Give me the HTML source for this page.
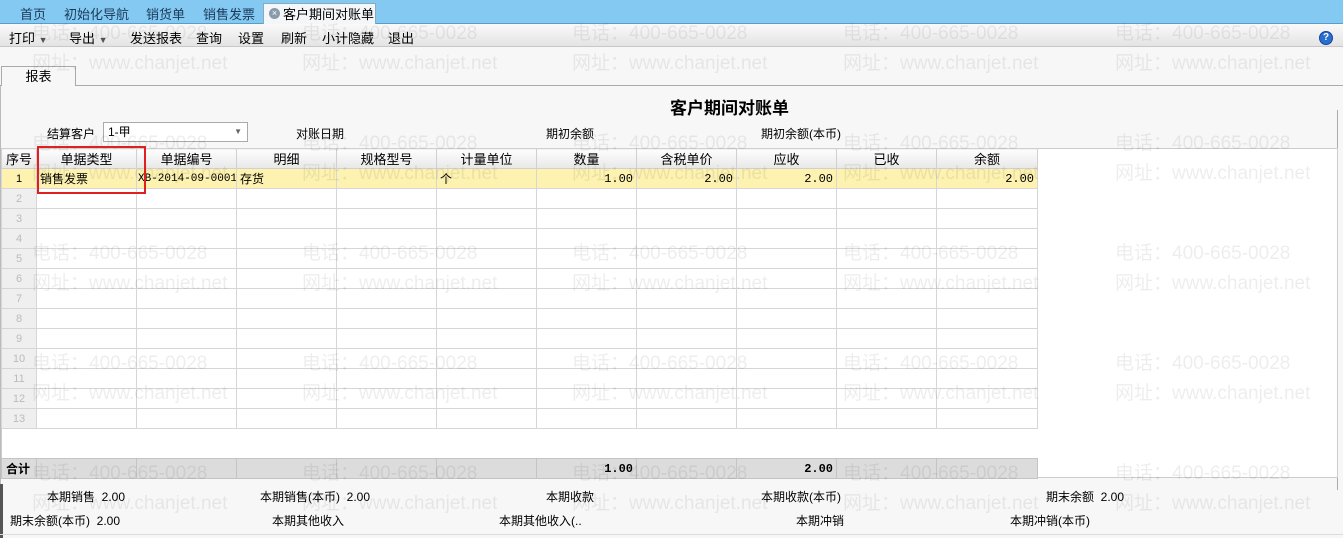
<!DOCTYPE html>
<html><head><meta charset="utf-8"><style>
*{margin:0;padding:0;box-sizing:border-box}
body{width:1343px;height:538px;overflow:hidden;background:#f7f7f7;font-family:"Liberation Sans","Noto Sans CJK SC",sans-serif;font-size:12px;color:#000;position:relative}
.a{position:absolute;white-space:nowrap}
.tabs{left:0;top:0;width:1343px;height:24px;background:#84c9f1;border-bottom:1px solid #5a9ccc}
.tab{top:4px;font-size:13px;color:#1a3a5a}
.toolbar{left:0;top:24px;width:1343px;height:23px;background:linear-gradient(#fafafa,#e4e4e4);border-bottom:1px solid #c8c8c8}
.tb{top:28px;font-size:13px}
.wm{color:rgba(0,0,0,0.07);font-size:19px;z-index:5}
table{border-collapse:collapse;position:absolute;left:1px;top:148px;table-layout:fixed;width:1036px}
td{border:1px solid #d6d6d6;height:20px;font-size:12px;padding:0 3px;overflow:hidden;white-space:nowrap}
th{border:1px solid #d0d0d0;height:20px;font-weight:normal;font-size:13px;background:linear-gradient(#fdfdfd,#e8e8e8)}
td.n{background:#efefef;color:#bbb;text-align:center;font-size:11px}
tr.y td{background:#fdf2b0}
tr.y td.n{color:#000;background:#fdf2b0}
.r{text-align:right;font-family:"Liberation Mono",monospace}
.mono{font-family:"Liberation Mono",monospace;font-size:11px;padding:0 1px !important}
.ft{font-size:12px}
</style></head><body>
<div class="a tabs"></div>
<div class="a tab" style="left:20px">首页</div>
<div class="a tab" style="left:64px">初始化导航</div>
<div class="a tab" style="left:146px">销货单</div>
<div class="a tab" style="left:203px">销售发票</div>
<div class="a" style="left:263px;top:3px;width:113px;height:22px;background:#f4f7fa;border:1px solid #8ab;border-bottom:none"></div>
<div class="a" style="left:269px;top:8px;width:11px;height:11px;border-radius:50%;background:#8a9aaa;color:#fff;font-size:9px;line-height:11px;text-align:center">×</div>
<div class="a tab" style="left:283px;color:#000">客户期间对账单</div>
<div class="a toolbar"></div>
<div class="a tb" style="left:9px">打印 <span style="font-size:9px;color:#555">▼</span></div>
<div class="a tb" style="left:69px">导出 <span style="font-size:9px;color:#555">▼</span></div>
<div class="a tb" style="left:130px">发送报表</div>
<div class="a tb" style="left:196px">查询</div>
<div class="a tb" style="left:238px">设置</div>
<div class="a tb" style="left:281px">刷新</div>
<div class="a tb" style="left:322px">小计隐藏</div>
<div class="a tb" style="left:388px">退出</div>
<div class="a" style="left:1319px;top:31px;width:14px;height:14px;border-radius:50%;background:#2a6fd0;border:1px solid #14449a;color:#fff;font-size:10px;font-weight:bold;text-align:center;line-height:12px">?</div>
<div class="a" style="left:0;top:85px;width:1343px;height:1px;background:#aaa"></div>
<div class="a" style="left:1px;top:66px;width:75px;height:20px;background:#f7f7f7;border:1px solid #aaa;border-bottom:none;text-align:center;font-size:13px;line-height:19px">报表</div>
<div class="a" style="left:0;top:86px;width:1px;height:452px;background:#bbb"></div>
<div class="a" style="left:1337px;top:110px;width:1px;height:380px;background:#aaa"></div>

<div class="a" style="left:670px;top:94px;font-size:17px;font-weight:bold">客户期间对账单</div>
<div class="a" style="left:47px;top:125px">结算客户</div>
<div class="a" style="left:103px;top:122px;width:145px;height:20px;background:#fff;border:1px solid #aaa;padding-left:4px;line-height:18px">1-甲<span style="position:absolute;right:5px;top:0;font-size:8px;color:#666">▼</span></div>
<div class="a" style="left:296px;top:125px">对账日期</div>
<div class="a" style="left:546px;top:125px">期初余额</div>
<div class="a" style="left:761px;top:125px">期初余额(本币)</div>

<div class="a" style="left:1px;top:148px;width:1337px;height:330px;background:#fff;border:1px solid #ccc"></div>
<table>
<colgroup><col style="width:35px"><col style="width:100px"><col style="width:100px"><col style="width:100px"><col style="width:100px"><col style="width:100px"><col style="width:100px"><col style="width:100px"><col style="width:100px"><col style="width:100px"><col style="width:101px"></colgroup>
<tr><th>序号</th><th>单据类型</th><th>单据编号</th><th>明细</th><th>规格型号</th><th>计量单位</th><th>数量</th><th>含税单价</th><th>应收</th><th>已收</th><th>余额</th></tr>
<tr class="y"><td class="n">1</td><td>销售发票</td><td class="mono">XB-2014-09-0001</td><td>存货</td><td></td><td>个</td><td class="r">1.00</td><td class="r">2.00</td><td class="r">2.00</td><td></td><td class="r">2.00</td></tr>
<tr><td class="n">2</td><td></td><td></td><td></td><td></td><td></td><td></td><td></td><td></td><td></td><td></td></tr>
<tr><td class="n">3</td><td></td><td></td><td></td><td></td><td></td><td></td><td></td><td></td><td></td><td></td></tr>
<tr><td class="n">4</td><td></td><td></td><td></td><td></td><td></td><td></td><td></td><td></td><td></td><td></td></tr>
<tr><td class="n">5</td><td></td><td></td><td></td><td></td><td></td><td></td><td></td><td></td><td></td><td></td></tr>
<tr><td class="n">6</td><td></td><td></td><td></td><td></td><td></td><td></td><td></td><td></td><td></td><td></td></tr>
<tr><td class="n">7</td><td></td><td></td><td></td><td></td><td></td><td></td><td></td><td></td><td></td><td></td></tr>
<tr><td class="n">8</td><td></td><td></td><td></td><td></td><td></td><td></td><td></td><td></td><td></td><td></td></tr>
<tr><td class="n">9</td><td></td><td></td><td></td><td></td><td></td><td></td><td></td><td></td><td></td><td></td></tr>
<tr><td class="n">10</td><td></td><td></td><td></td><td></td><td></td><td></td><td></td><td></td><td></td><td></td></tr>
<tr><td class="n">11</td><td></td><td></td><td></td><td></td><td></td><td></td><td></td><td></td><td></td><td></td></tr>
<tr><td class="n">12</td><td></td><td></td><td></td><td></td><td></td><td></td><td></td><td></td><td></td><td></td></tr>
<tr><td class="n">13</td><td></td><td></td><td></td><td></td><td></td><td></td><td></td><td></td><td></td><td></td></tr>
</table>
<div class="a" style="left:37px;top:146px;width:109px;height:48px;border:2px solid #e02020;z-index:6"></div>

<table style="top:458px">
<colgroup><col style="width:35px"><col style="width:100px"><col style="width:100px"><col style="width:100px"><col style="width:100px"><col style="width:100px"><col style="width:100px"><col style="width:100px"><col style="width:100px"><col style="width:100px"><col style="width:101px"></colgroup>
<tr style="background:#dcdcdc"><td style="border-color:#c4c4c4;font-weight:bold;font-size:12px;padding:0 4px">合计</td><td style="border-color:#c4c4c4"></td><td style="border-color:#c4c4c4"></td><td style="border-color:#c4c4c4"></td><td style="border-color:#c4c4c4"></td><td style="border-color:#c4c4c4"></td><td class="r" style="border-color:#c4c4c4;font-weight:bold">1.00</td><td style="border-color:#c4c4c4"></td><td class="r" style="border-color:#c4c4c4;font-weight:bold">2.00</td><td style="border-color:#c4c4c4"></td><td style="border-color:#c4c4c4"></td></tr>
</table>

<div class="a wm" style="left:32px;top:18px">电话：400-665-0028</div><div class="a wm" style="left:32px;top:48px">网址：www.chanjet.net</div>
<div class="a wm" style="left:302px;top:18px">电话：400-665-0028</div><div class="a wm" style="left:302px;top:48px">网址：www.chanjet.net</div>
<div class="a wm" style="left:572px;top:18px">电话：400-665-0028</div><div class="a wm" style="left:572px;top:48px">网址：www.chanjet.net</div>
<div class="a wm" style="left:843px;top:18px">电话：400-665-0028</div><div class="a wm" style="left:843px;top:48px">网址：www.chanjet.net</div>
<div class="a wm" style="left:1115px;top:18px">电话：400-665-0028</div><div class="a wm" style="left:1115px;top:48px">网址：www.chanjet.net</div>
<div class="a wm" style="left:32px;top:128px">电话：400-665-0028</div><div class="a wm" style="left:32px;top:158px">网址：www.chanjet.net</div>
<div class="a wm" style="left:302px;top:128px">电话：400-665-0028</div><div class="a wm" style="left:302px;top:158px">网址：www.chanjet.net</div>
<div class="a wm" style="left:572px;top:128px">电话：400-665-0028</div><div class="a wm" style="left:572px;top:158px">网址：www.chanjet.net</div>
<div class="a wm" style="left:843px;top:128px">电话：400-665-0028</div><div class="a wm" style="left:843px;top:158px">网址：www.chanjet.net</div>
<div class="a wm" style="left:1115px;top:128px">电话：400-665-0028</div><div class="a wm" style="left:1115px;top:158px">网址：www.chanjet.net</div>
<div class="a wm" style="left:32px;top:238px">电话：400-665-0028</div><div class="a wm" style="left:32px;top:268px">网址：www.chanjet.net</div>
<div class="a wm" style="left:302px;top:238px">电话：400-665-0028</div><div class="a wm" style="left:302px;top:268px">网址：www.chanjet.net</div>
<div class="a wm" style="left:572px;top:238px">电话：400-665-0028</div><div class="a wm" style="left:572px;top:268px">网址：www.chanjet.net</div>
<div class="a wm" style="left:843px;top:238px">电话：400-665-0028</div><div class="a wm" style="left:843px;top:268px">网址：www.chanjet.net</div>
<div class="a wm" style="left:1115px;top:238px">电话：400-665-0028</div><div class="a wm" style="left:1115px;top:268px">网址：www.chanjet.net</div>
<div class="a wm" style="left:32px;top:348px">电话：400-665-0028</div><div class="a wm" style="left:32px;top:378px">网址：www.chanjet.net</div>
<div class="a wm" style="left:302px;top:348px">电话：400-665-0028</div><div class="a wm" style="left:302px;top:378px">网址：www.chanjet.net</div>
<div class="a wm" style="left:572px;top:348px">电话：400-665-0028</div><div class="a wm" style="left:572px;top:378px">网址：www.chanjet.net</div>
<div class="a wm" style="left:843px;top:348px">电话：400-665-0028</div><div class="a wm" style="left:843px;top:378px">网址：www.chanjet.net</div>
<div class="a wm" style="left:1115px;top:348px">电话：400-665-0028</div><div class="a wm" style="left:1115px;top:378px">网址：www.chanjet.net</div>
<div class="a wm" style="left:32px;top:458px">电话：400-665-0028</div>
<div class="a wm" style="left:302px;top:458px">电话：400-665-0028</div>
<div class="a wm" style="left:572px;top:458px">电话：400-665-0028</div>
<div class="a wm" style="left:843px;top:458px">电话：400-665-0028</div>
<div class="a wm" style="left:1115px;top:458px">电话：400-665-0028</div>
<div class="a wm" style="left:32px;top:488px">网址：www.chanjet.net</div>
<div class="a wm" style="left:302px;top:488px">网址：www.chanjet.net</div>
<div class="a wm" style="left:572px;top:488px">网址：www.chanjet.net</div>
<div class="a wm" style="left:843px;top:488px">网址：www.chanjet.net</div>
<div class="a wm" style="left:1115px;top:488px">网址：www.chanjet.net</div>

<div class="a ft" style="left:47px;top:488px">本期销售&nbsp; 2.00</div>
<div class="a ft" style="left:260px;top:488px">本期销售(本币)&nbsp; 2.00</div>
<div class="a ft" style="left:546px;top:488px">本期收款</div>
<div class="a ft" style="left:761px;top:488px">本期收款(本币)</div>
<div class="a ft" style="left:1046px;top:488px">期末余额&nbsp; 2.00</div>
<div class="a ft" style="left:10px;top:512px">期末余额(本币)&nbsp; 2.00</div>
<div class="a ft" style="left:272px;top:512px">本期其他收入</div>
<div class="a ft" style="left:499px;top:512px">本期其他收入(..</div>
<div class="a ft" style="left:796px;top:512px">本期冲销</div>
<div class="a ft" style="left:1010px;top:512px">本期冲销(本币)</div>
<div class="a" style="left:0;top:484px;width:3px;height:54px;background:#555"></div>
<div class="a" style="left:0;top:534px;width:1343px;height:1px;background:#ddd"></div>
</body></html>
